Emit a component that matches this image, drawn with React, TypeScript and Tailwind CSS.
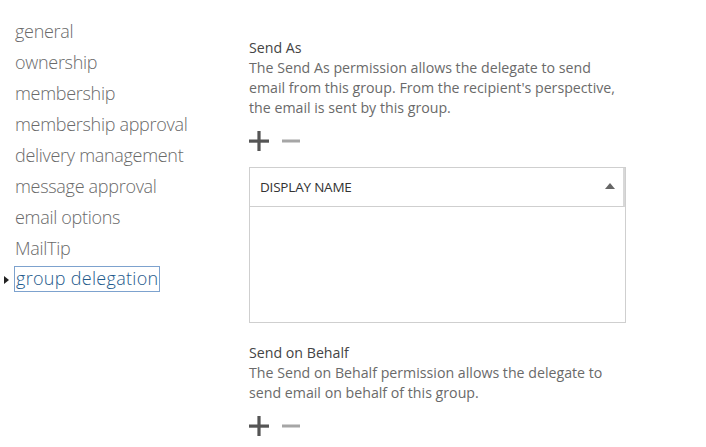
import React from "react";

const navItems = [
  "general",
  "ownership",
  "membership",
  "membership approval",
  "delivery management",
  "message approval",
  "email options",
  "MailTip",
];

function PlusMinus() {
  return (
    <div className="flex items-center gap-[13px] h-[22px]">
      <svg width="20" height="20" viewBox="0 0 20 20">
        <rect x="0" y="8.5" width="20" height="3.2" fill="#555" />
        <rect x="8.4" y="0" width="3.2" height="20" fill="#555" />
      </svg>
      <svg width="18" height="20" viewBox="0 0 18 20">
        <rect x="0" y="8.5" width="18" height="3" fill="#a6a6a6" />
      </svg>
    </div>
  );
}

export default function App() {
  return (
    <div
      className="w-[706px] h-[447px] bg-white flex overflow-hidden"
      style={{ fontFamily: '"Open Sans", "Liberation Sans", sans-serif' }}
    >
      <div className="w-[249px] pt-[19px] pl-[15px] flex flex-col">
        {navItems.map((t) => (
          <div
            key={t}
            className="h-[31px] leading-[24px] text-[18px] font-light text-[#6a6a6a] tracking-[-0.3px] whitespace-nowrap"
          >
            {t}
          </div>
        ))}
        <div className="relative h-[31px]">
          <div className="absolute left-[-11px] top-[9px] w-0 h-0 border-y-[4px] border-y-transparent border-l-[5px] border-l-[#222]" />
          <div className="inline-block ml-[-1px] mt-[-1px] px-[1px] h-[26px] leading-[23px] border border-[#7da2ce] text-[18px] font-light text-[#1e5a8c] tracking-[0.3px] whitespace-nowrap">
            group delegation
          </div>
        </div>
      </div>
      <div className="flex flex-col pt-[39px] w-[400px]">
        <div className="text-[14.2px] leading-[18px] text-[#444]">Send As</div>
        <div className="text-[14.2px] leading-[20px] text-[#6a6a6a] mt-[1px] whitespace-nowrap">
          The Send As permission allows the delegate to send
          <br />
          email from this group. From the recipient's perspective,
          <br />
          the email is sent by this group.
        </div>
        <div className="mt-[12px]">
          <PlusMinus />
        </div>
        <div className="mt-[15px] w-[377px] h-[156px] border border-[#cfcfcf] flex flex-col">
          <div className="h-[39px] border-b border-[#cfcfcf] flex items-center justify-between pl-[10px] pr-[8px] border-r-2 border-r-[#d8d8d8]">
            <span className="text-[13.5px] text-[#333] tracking-[-0.2px]">DISPLAY NAME</span>
            <div className="w-0 h-0 border-x-[5px] border-x-transparent border-b-[6px] border-b-[#666] mt-[-2px]" />
          </div>
        </div>
        <div className="mt-[21px] text-[14.2px] leading-[18px] text-[#444]">Send on Behalf</div>
        <div className="text-[14.2px] leading-[20px] text-[#6a6a6a] mt-[1px] whitespace-nowrap">
          The Send on Behalf permission allows the delegate to
          <br />
          send email on behalf of this group.
        </div>
        <div className="mt-[12px]">
          <PlusMinus />
        </div>
      </div>
    </div>
  );
}
